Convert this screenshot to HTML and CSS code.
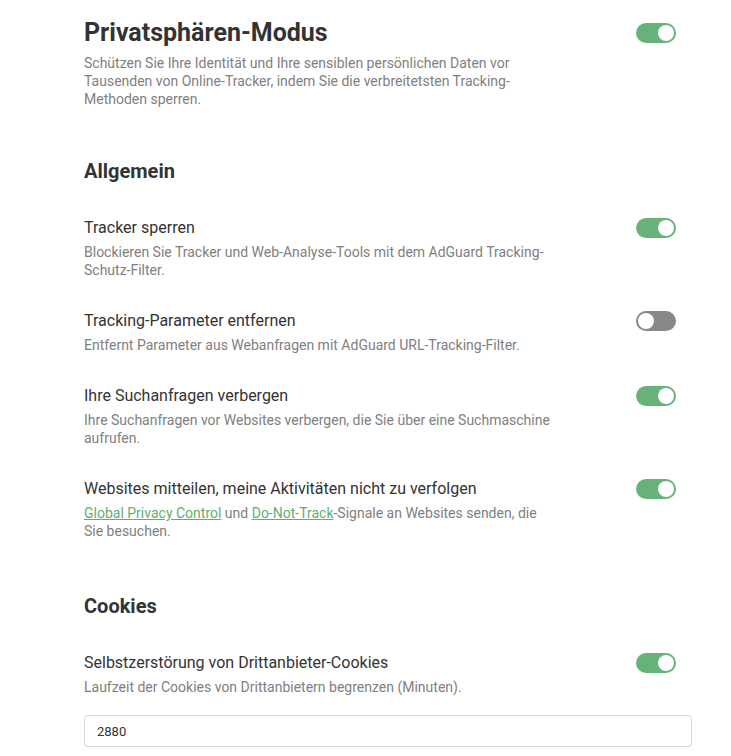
FILE: index.html
```html
<!DOCTYPE html>
<html>
<head>
<meta charset="UTF-8">
<title>Tracking-Schutz</title>
<link rel="stylesheet" href="styles.css">
</head>
<body>
<div class="settings">

  <div class="page_head">
    <div class="row">
      <div class="text_col">
        <h1 class="page_title">Privatsphären-Modus</h1>
      </div>
      <div class="toggle toggle_big on"></div>
    </div>
    <p class="desc">Schützen Sie Ihre Identität und Ihre sensiblen persönlichen Daten vor Tausenden von Online-Tracker, indem Sie die verbreitetsten Tracking-Methoden sperren.</p>
  </div>

  <div class="group">
    <h2 class="group_title">Allgemein</h2>

    <div class="item">
      <div class="row">
        <div class="text_col">
          <div class="item_title">Tracker sperren</div>
          <p class="desc">Blockieren Sie Tracker und Web-Analyse-Tools mit dem AdGuard Tracking-Schutz-Filter.</p>
        </div>
        <div class="toggle on"></div>
      </div>
    </div>

    <div class="item">
      <div class="row">
        <div class="text_col">
          <div class="item_title">Tracking-Parameter entfernen</div>
          <p class="desc">Entfernt Parameter aus Webanfragen mit AdGuard URL-Tracking-Filter.</p>
        </div>
        <div class="toggle"></div>
      </div>
    </div>

    <div class="item">
      <div class="row">
        <div class="text_col">
          <div class="item_title">Ihre Suchanfragen verbergen</div>
          <p class="desc">Ihre Suchanfragen vor Websites verbergen, die Sie über eine Suchmaschine aufrufen.</p>
        </div>
        <div class="toggle on"></div>
      </div>
    </div>

    <div class="item">
      <div class="row">
        <div class="text_col">
          <div class="item_title">Websites mitteilen, meine Aktivitäten nicht zu verfolgen</div>
          <p class="desc"><a href="#">Global Privacy Control</a> und <a href="#">Do-Not-Track</a>-Signale an Websites senden, die Sie besuchen.</p>
        </div>
        <div class="toggle on"></div>
      </div>
    </div>
  </div>

  <div class="group group_next">
    <h2 class="group_title">Cookies</h2>

    <div class="item">
      <div class="row">
        <div class="text_col">
          <div class="item_title">Selbstzerstörung von Drittanbieter-Cookies</div>
          <p class="desc">Laufzeit der Cookies von Drittanbietern begrenzen (Minuten).</p>
        </div>
        <div class="toggle on"></div>
      </div>
      <input class="input_text" type="text" value="2880">
    </div>
  </div>

</div>
</body>
</html>
```

FILE: styles.css
```css
html, body {
  margin: 0;
  padding: 0;
  background: #ffffff;
}

body {
  font-family: Roboto, "Liberation Sans", sans-serif;
  color: #333333;
}

.settings {
  width: 608px;
  padding: 17px 0 0 84px;
}

.row {
  display: flex;
  justify-content: space-between;
  align-items: flex-start;
}

.text_col {
  max-width: 470px;
}

.page_title {
  margin: 0;
  font-size: 25px;
  line-height: 32px;
  font-weight: 700;
  color: #333333;
}

.page_head .desc {
  margin-top: 5px;
  max-width: 470px;
}

.desc {
  margin: 4px 0 0 0;
  font-size: 14px;
  line-height: 18px;
  color: #808080;
}

.desc a {
  color: #5fb06f;
  text-decoration: underline;
}

.group {
  margin-top: 49px;
}

/* collapses with the last item's bottom margin */
.group_next {
  margin-top: 52px;
}

.group_title {
  margin: 0 0 32px 0;
  font-size: 20px;
  line-height: 28px;
  font-weight: 700;
  color: #333333;
}

.item {
  margin-bottom: 31px;
}

.item_title {
  font-size: 16px;
  line-height: 22px;
  color: #333333;
}

.toggle {
  position: relative;
  flex: none;
  width: 40px;
  height: 20px;
  margin: 1px 16px 0 0;
  border-radius: 10px;
  background: #888888;
}

.toggle:after {
  content: "";
  position: absolute;
  top: 2px;
  left: 2px;
  width: 16px;
  height: 16px;
  border-radius: 50%;
  background: #ffffff;
}

.toggle.on {
  background: #67b279;
}

.toggle.on:after {
  left: 22px;
}

.toggle_big {
  margin-top: 6px;
}

.input_text {
  display: block;
  box-sizing: border-box;
  width: 608px;
  height: 32px;
  margin-top: 19px;
  padding: 0 12px;
  border: 1px solid #d6d6d6;
  border-radius: 4px;
  font: normal 13px Roboto, "Liberation Sans", sans-serif;
  color: #333333;
  background: #ffffff;
}
```
